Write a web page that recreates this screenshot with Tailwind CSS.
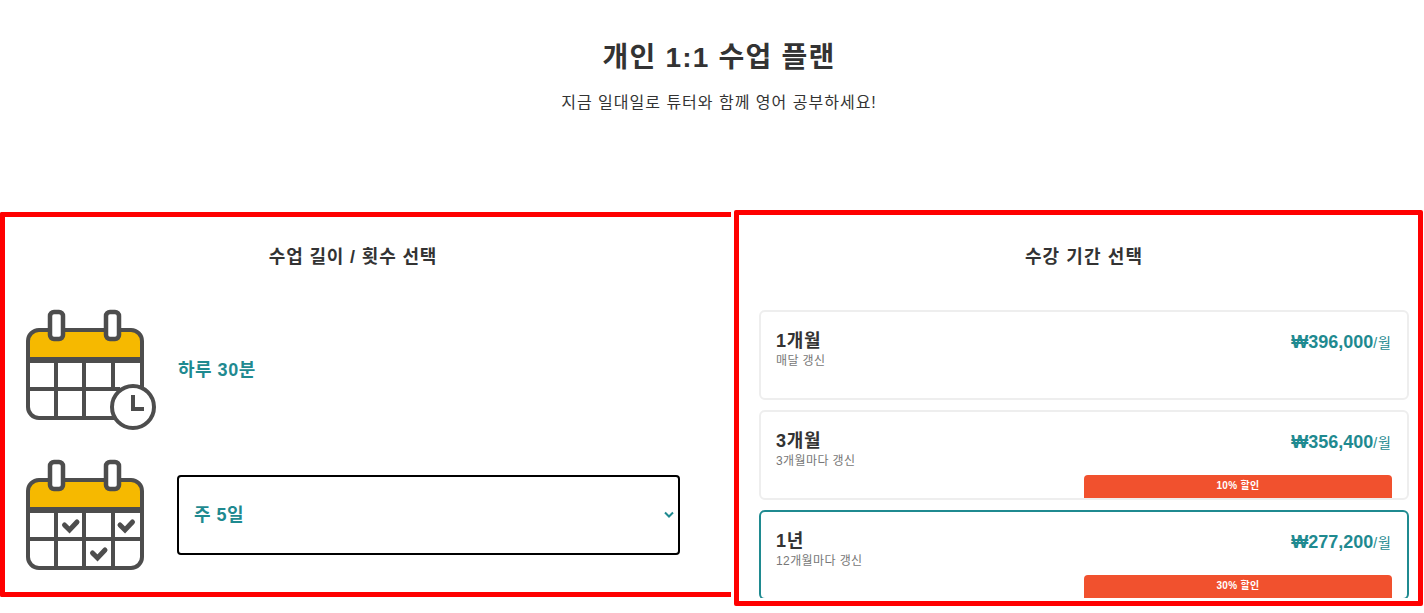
<!DOCTYPE html>
<html lang="ko">
<head>
    <meta charset="UTF-8">
    <meta name="viewport" content="width=device-width, initial-scale=1.0">
    <title>개인 1:1 수업 플랜</title>
    <script src="https://cdn.jsdelivr.net/npm/@tailwindcss/browser@4"></script>
</head>
<body class="bg-white text-[#333] font-['Liberation_Sans','Noto_Sans_CJK_KR',sans-serif] h-[613px] overflow-hidden">
    <header class="h-[210px] pt-[38px] pl-[14px] text-center">
        <h1 class="text-[28px] leading-[40px] font-bold tracking-[1.2px]">개인 1:1 수업 플랜</h1>
        <p class="mt-[13px] text-[16px] leading-[24px] tracking-[1px]">지금 일대일로 튜터와 함께 영어 공부하세요!</p>
    </header>

    <main class="flex items-start gap-[3px]">
        <!-- lesson length / frequency -->
        <section class="w-[731px] h-[385px] mt-[2px] border-[5px] border-r-0 border-[#f00] rounded-l-[2px] pr-[30px]">
            <h2 class="mt-[27px] text-[18px] leading-[26px] font-bold text-center tracking-[0.85px]">수업 길이 / 횟수 선택</h2>

            <div class="mt-[38px] flex items-center h-[124px] pl-[20px]">
                <svg class="shrink-0" width="132" height="124" viewBox="0 0 132 124" fill="none" stroke="#4d4d4d" stroke-width="4">
                    <path d="M3 51V33a11 11 0 0 1 11-11h92a11 11 0 0 1 11 11v18z" fill="#f6b900"/>
                    <path d="M3 53v46a11 11 0 0 0 11 11h92M117 53v26M3 53h114M3 81h92M31 53v57M59 53v57M88 53v30"/>
                    <rect x="25" y="4" width="13" height="27" rx="4" fill="#fff" stroke-width="4.5"/>
                    <rect x="81" y="4" width="13" height="27" rx="4" fill="#fff" stroke-width="4.5"/>
                    <circle cx="108" cy="99" r="21" fill="#fff"/>
                    <path d="M108 87v14h11"/>
                </svg>
                <span class="ml-[21px] text-[18px] font-bold text-[#1f8a90] tracking-[0.5px]">하루 30분</span>
            </div>

            <div class="mt-[26px] flex items-center h-[124px] pl-[20px]">
                <svg class="shrink-0" width="132" height="124" viewBox="0 0 132 124" fill="none" stroke="#4d4d4d" stroke-width="4">
                    <path d="M3 51V33a11 11 0 0 1 11-11h92a11 11 0 0 1 11 11v18z" fill="#f6b900"/>
                    <path d="M3 53v46a11 11 0 0 0 11 11h92a11 11 0 0 0 11-11V53M3 53h114M3 81h114M31 53v57M59 53v57M88 53v57"/>
                    <rect x="25" y="4" width="13" height="27" rx="4" fill="#fff" stroke-width="4.5"/>
                    <rect x="81" y="4" width="13" height="27" rx="4" fill="#fff" stroke-width="4.5"/>
                    <path stroke-width="5" stroke-linecap="round" d="M39.5 67l5 5 7.5-8M95 67l5 5 7.5-8M67.5 95l5 5 7.5-8"/>
                </svg>
                <div class="relative ml-[20px] mb-[10px] w-[503px]">
                    <select class="block w-full h-[80px] appearance-none bg-white border-2 border-black rounded-[4px] pl-[15px] text-[18px] font-bold text-[#1f8a90] tracking-[0.5px]">
                        <option>주 5일</option>
                    </select>
                    <svg class="absolute right-[6px] top-[36px]" width="10" height="8" viewBox="0 0 10 8" fill="none" stroke="#1f8a90" stroke-width="2">
                        <path d="M1 1.5l4 4 4-4"/>
                    </svg>
                </div>
            </div>
        </section>

        <!-- subscription period -->
        <section class="w-[689px] h-[396px] border-[5px] border-[#f00] rounded-[2px] pl-[20px] pr-[9px] pb-[3px] flex flex-col">
            <h2 class="mt-[29px] text-[18px] leading-[26px] font-bold text-center tracking-[1.1px]">수강 기간 선택</h2>

            <div class="mt-[40px] flex-1 overflow-hidden flex flex-col gap-[10px]">
                <div class="shrink-0 h-[90px] border-2 border-[#eee] rounded-[6px] flex flex-col pl-[15px] pr-[15px]">
                    <div class="flex justify-between pt-[18px]">
                        <div>
                            <div class="text-[18px] leading-[22px] font-bold tracking-[0.7px]">1개월</div>
                            <div class="mt-[2px] text-[12px] leading-[14px] text-[#777] tracking-[0.4px]">매달 갱신</div>
                        </div>
                        <div class="text-[#1f8a90] leading-[26px] -mt-[1px]"><span class="text-[18px] font-bold">₩396,000</span><span class="text-[14px] tracking-[1px]">/월</span></div>
                    </div>
                </div>

                <div class="shrink-0 h-[90px] border-2 border-[#eee] rounded-[6px] flex flex-col pl-[15px] pr-[15px]">
                    <div class="flex justify-between pt-[18px]">
                        <div>
                            <div class="text-[18px] leading-[22px] font-bold tracking-[0.7px]">3개월</div>
                            <div class="mt-[2px] text-[12px] leading-[14px] text-[#777] tracking-[0.4px]">3개월마다 갱신</div>
                        </div>
                        <div class="text-[#1f8a90] leading-[26px] -mt-[1px]"><span class="text-[18px] font-bold">₩356,400</span><span class="text-[14px] tracking-[1px]">/월</span></div>
                    </div>
                    <div class="mt-auto self-end w-[308px] h-[23px] bg-[#f1512e] rounded-t-[4px] text-white text-[10px] leading-[21px] font-bold text-center tracking-[0.3px]">10% 할인</div>
                </div>

                <div class="shrink-0 h-[90px] border-2 border-[#1f8a90] rounded-[6px] flex flex-col pl-[15px] pr-[15px]">
                    <div class="flex justify-between pt-[18px]">
                        <div>
                            <div class="text-[18px] leading-[22px] font-bold tracking-[0.7px]">1년</div>
                            <div class="mt-[2px] text-[12px] leading-[14px] text-[#777] tracking-[0.4px]">12개월마다 갱신</div>
                        </div>
                        <div class="text-[#1f8a90] leading-[26px] -mt-[1px]"><span class="text-[18px] font-bold">₩277,200</span><span class="text-[14px] tracking-[1px]">/월</span></div>
                    </div>
                    <div class="mt-auto self-end w-[308px] h-[23px] bg-[#f1512e] rounded-t-[4px] text-white text-[10px] leading-[21px] font-bold text-center tracking-[0.3px]">30% 할인</div>
                </div>
            </div>
        </section>
    </main>
</body>
</html>
